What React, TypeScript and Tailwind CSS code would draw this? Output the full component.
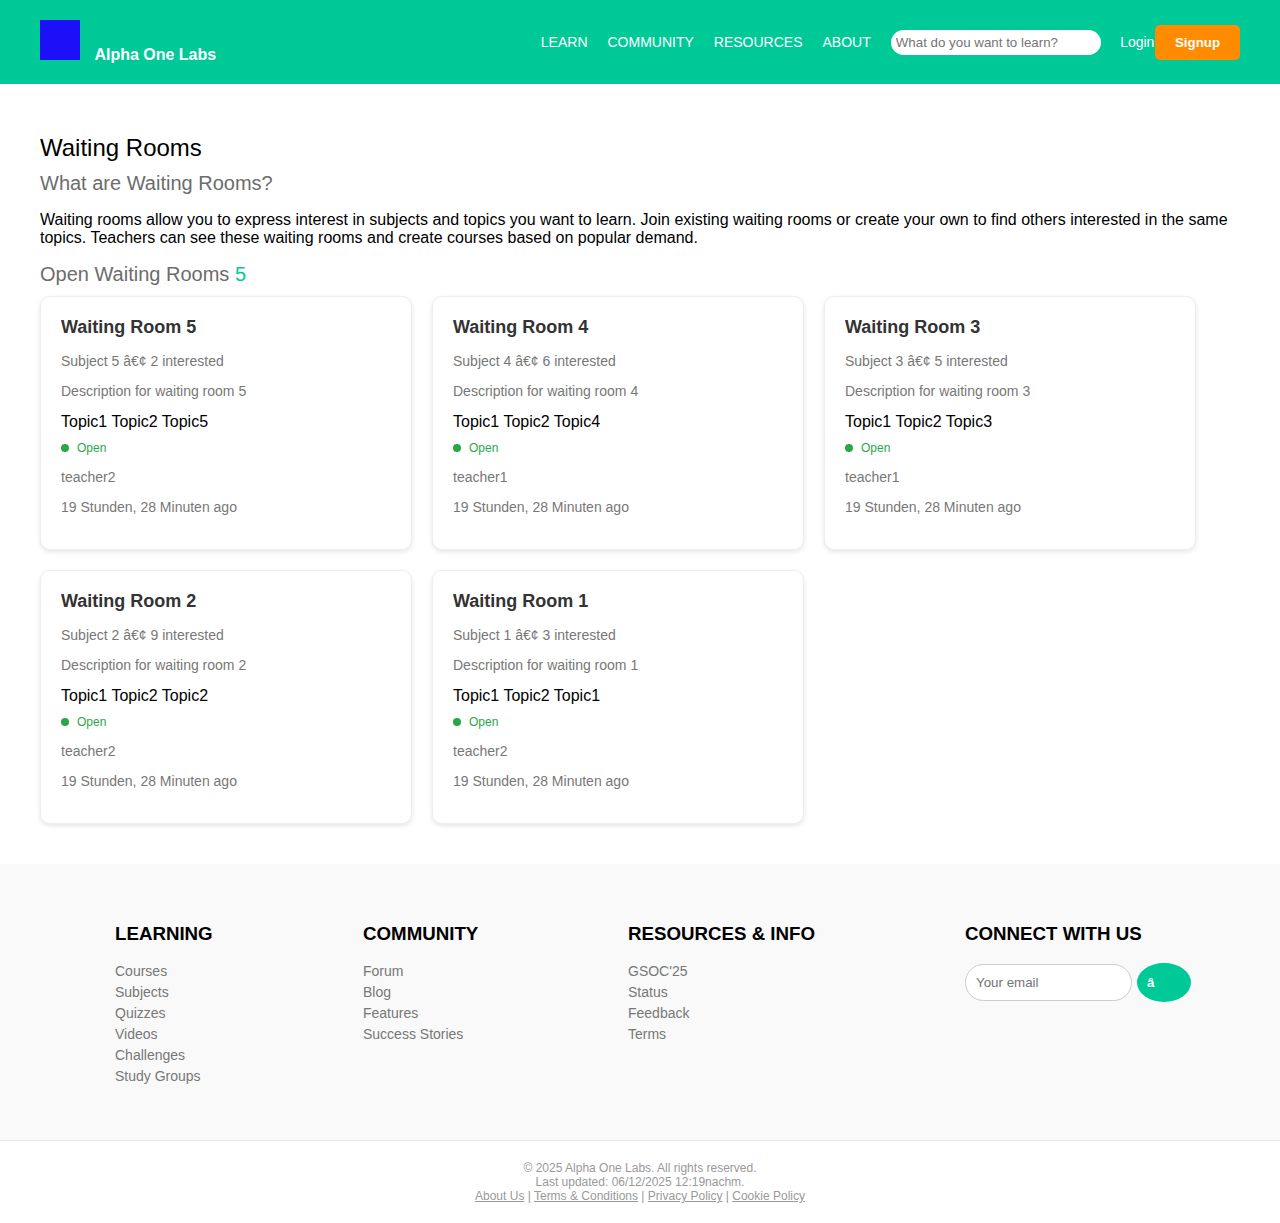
const rooms = [
  { id: 5, interested: 2, teacher: "teacher2" },
  { id: 4, interested: 6, teacher: "teacher1" },
  { id: 3, interested: 5, teacher: "teacher1" },
  { id: 2, interested: 9, teacher: "teacher2" },
  { id: 1, interested: 3, teacher: "teacher2" },
];

const linkColumns = [
  { title: "LEARNING", links: ["Courses", "Subjects", "Quizzes", "Videos", "Challenges", "Study Groups"] },
  { title: "COMMUNITY", links: ["Forum", "Blog", "Features", "Success Stories"] },
  { title: "RESOURCES & INFO", links: ["GSOC'25", "Status", "Feedback", "Terms"] },
];

const legalLinks = ["About Us", "Terms & Conditions", "Privacy Policy", "Cookie Policy"];

function Header() {
  return (
    <header className="flex h-[84px] items-center justify-between bg-[#00c998] px-10 text-white">
      <div className="flex h-11 items-start">
        <div className="h-10 w-10 bg-[#1b10f8]" />
        <span className="mt-[26px] ml-[14.4px] text-[16px] leading-[18px] font-bold">Alpha One Labs</span>
      </div>
      <div className="flex items-center text-[14px] leading-4">
        <nav className="mr-5 flex gap-5">
          {["LEARN", "COMMUNITY", "RESOURCES", "ABOUT"].map((item) => (
            <a key={item} href="#">{item}</a>
          ))}
        </nav>
        <input
          className="h-[25px] w-[210px] rounded-full bg-white px-[5px] text-[13.333px] text-black placeholder:text-[#757575]"
          placeholder="What do you want to learn?"
        />
        <a href="#" className="mr-[0.6px] ml-[19.4px]">Login</a>
        <button className="h-[35px] w-[85px] rounded-[5px] bg-[#ff8c00] pt-px text-[13.333px] font-bold">Signup</button>
      </div>
    </header>
  );
}

function RoomCard({ id, interested, teacher }: { id: number; interested: number; teacher: string }) {
  return (
    <article className="h-[254px] rounded-[10px] border border-[#eee] bg-white p-5 text-[14px] leading-4 text-[#777] shadow-[0_2px_5px_rgba(0,0,0,0.1)]">
      <h3 className="text-[18px] leading-[21px] font-bold text-[#333]">Waiting Room {id}</h3>
      <p className="mt-[15px]">Subject {id} â€¢ {interested} interested</p>
      <p className="mt-[14px]">Description for waiting room {id}</p>
      <div className="mt-[14px] text-[16px] leading-[18px] text-black">Topic1 Topic2 Topic{id}</div>
      <div className="mt-[10px] flex items-center gap-2 text-[12px] leading-[14px] text-[#28a745]">
        <span className="h-2 w-2 rounded-full bg-[#28a745]" />
        Open
      </div>
      <p className="mt-[14px]">{teacher}</p>
      <p className="mt-[14px]">19 Stunden, 28 Minuten ago</p>
    </article>
  );
}

export default function App() {
  return (
    <div className="min-h-[1223px] bg-white font-['Liberation_Sans',Arial,sans-serif] text-black">
      <Header />
      <main className="h-[780px] px-10 pt-[50px]">
        <h1 className="text-[24px] leading-[27px]">Waiting Rooms</h1>
        <h2 className="mt-[11px] text-[20px] leading-[23px] text-[#6c6c6c]">What are Waiting Rooms?</h2>
        <p className="mt-4 text-[16px] leading-[18px]">
          Waiting rooms allow you to express interest in subjects and topics you want to learn. Join existing waiting
          rooms or create your own to find others interested in the same topics. Teachers can see these waiting rooms
          and create courses based on popular demand.
        </p>
        <h2 className="mt-4 text-[20px] leading-[23px] text-[#6c6c6c]">
          Open Waiting Rooms <span className="text-[#00c998]">5</span>
        </h2>
        <section className="mt-[10px] grid grid-cols-[repeat(3,372px)] gap-5">
          {rooms.map((room) => (
            <RoomCard key={room.id} {...room} />
          ))}
        </section>
      </main>
      <footer>
        <div className="grid h-[276px] grid-cols-[248px_265px_337px_226px] bg-[#f9f9f9] pt-[59px] pl-[115px]">
          {linkColumns.map((column) => (
            <div key={column.title}>
              <h3 className="text-[18.72px] leading-[21px] font-bold">{column.title}</h3>
              <ul className="mt-[19px] flex flex-col gap-[5px] text-[14px] leading-4 text-[#777]">
                {column.links.map((link) => (
                  <li key={link}><a href="#">{link}</a></li>
                ))}
              </ul>
            </div>
          ))}
          <div>
            <h3 className="text-[18.72px] leading-[21px] font-bold">CONNECT WITH US</h3>
            <form className="mt-[19px] flex items-center gap-[5px]">
              <input
                className="h-[37px] w-[167px] rounded-[20px] border border-[#ccc] bg-white px-[10px] text-[13.333px] placeholder:text-[#757575]"
                placeholder="Your email"
              />
              <button type="button" className="h-[39px] w-[54px] rounded-[50%] bg-[#00c998] px-[10px] text-left text-[13.333px] font-bold text-white">
                â
              </button>
            </form>
          </div>
        </div>
        <div className="border-t border-[#eaeaea] pt-5 text-center text-[12px] leading-[14px] text-[#999]">
          <p>© 2025 Alpha One Labs. All rights reserved.</p>
          <p>Last updated: 06/12/2025 12:19nachm.</p>
          <p>
            {legalLinks.map((link, i) => (
              <span key={link}>
                {i > 0 && " | "}
                <a href="#" className="underline">{link}</a>
              </span>
            ))}
          </p>
        </div>
      </footer>
    </div>
  );
}
